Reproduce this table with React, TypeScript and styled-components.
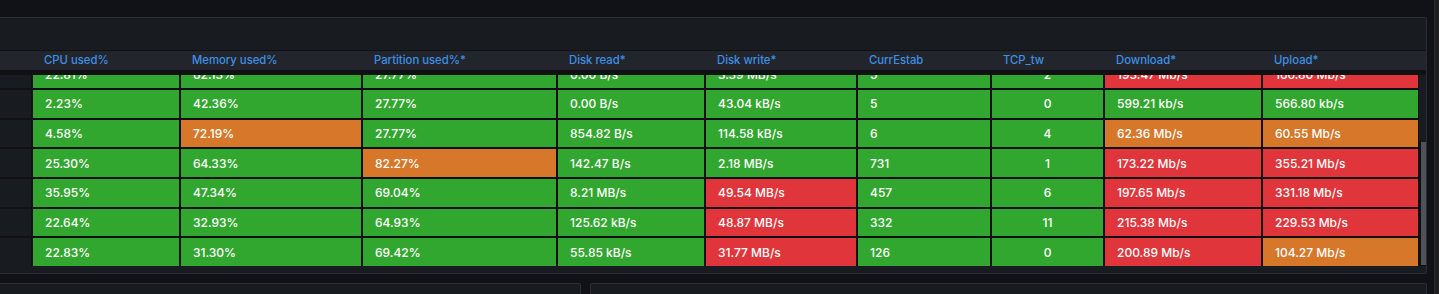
import React from 'react';
import styled, { createGlobalStyle } from 'styled-components';

type Tone = 'green' | 'orange' | 'red' | 'none';
type Cell = [string, Tone];

const COLUMNS = [
  { title: '', align: 'left' },
  { title: 'CPU used%', align: 'left' },
  { title: 'Memory used%', align: 'left' },
  { title: 'Partition used%*', align: 'left' },
  { title: 'Disk read*', align: 'left' },
  { title: 'Disk write*', align: 'left' },
  { title: 'CurrEstab', align: 'left' },
  { title: 'TCP_tw', align: 'center' },
  { title: 'Download*', align: 'left' },
  { title: 'Upload*', align: 'left' },
];

const g = (v: string): Cell => [v, 'green'];
const o = (v: string): Cell => [v, 'orange'];
const r = (v: string): Cell => [v, 'red'];

// first row is scrolled half out of view, like in the dashboard
const ROWS: Cell[][] = [
  [g('22.81%'), g('62.13%'), g('27.77%'), g('0.00 B/s'), g('3.39 MB/s'), g('5'), g('2'), r('193.47 Mb/s'), r('166.80 Mb/s')],
  [g('2.23%'), g('42.36%'), g('27.77%'), g('0.00 B/s'), g('43.04 kB/s'), g('5'), g('0'), g('599.21 kb/s'), g('566.80 kb/s')],
  [g('4.58%'), o('72.19%'), g('27.77%'), g('854.82 B/s'), g('114.58 kB/s'), g('6'), g('4'), o('62.36 Mb/s'), o('60.55 Mb/s')],
  [g('25.30%'), g('64.33%'), o('82.27%'), g('142.47 B/s'), g('2.18 MB/s'), g('731'), g('1'), r('173.22 Mb/s'), r('355.21 Mb/s')],
  [g('35.95%'), g('47.34%'), g('69.04%'), g('8.21 MB/s'), r('49.54 MB/s'), g('457'), g('6'), r('197.65 Mb/s'), r('331.18 Mb/s')],
  [g('22.64%'), g('32.93%'), g('64.93%'), g('125.62 kB/s'), r('48.87 MB/s'), g('332'), g('11'), r('215.38 Mb/s'), r('229.53 Mb/s')],
  [g('22.83%'), g('31.30%'), g('69.42%'), g('55.85 kB/s'), r('31.77 MB/s'), g('126'), g('0'), r('200.89 Mb/s'), o('104.27 Mb/s')],
];

const App = () => {
  return (
    <>
      <GlobalStyle />
      <Page>
        <Main>
          <Panel>
            <PanelTitle />
            <Table>
              <HeaderRow>
                {COLUMNS.map((c, i) => (
                  <HeaderCell key={i}>{c.title}</HeaderCell>
                ))}
              </HeaderRow>
              <Body>
                <Rows>
                  {ROWS.map((row, ri) => (
                    <React.Fragment key={ri}>
                      <Cell $tone="none" $align="left" />
                      {row.map(([value, tone], ci) => (
                        <Cell key={ci} $tone={tone} $align={COLUMNS[ci + 1].align}>
                          {value}
                        </Cell>
                      ))}
                    </React.Fragment>
                  ))}
                </Rows>
                <ScrollTrack>
                  <ScrollThumb />
                </ScrollTrack>
              </Body>
            </Table>
          </Panel>
          <BottomRow>
            <SmallPanel $width="621px" />
            <SmallPanel $width="auto" />
          </BottomRow>
        </Main>
        <PageScroll />
      </Page>
    </>
  );
};

export default App;

const GRID = '70px 146px 180px 193px 146px 150px 132px 111px 156px 155px';

const TONES: Record<Tone, string> = {
  green: '#32a72f',
  orange: '#d6772a',
  red: '#e0353a',
  none: '#181b1f',
};

const GlobalStyle = createGlobalStyle`
  html, body {
    margin: 0;
    padding: 0;
    background: #111217;
    overflow: hidden;
  }
  body {
    font-family: Inter, 'Noto Sans', sans-serif;
    -webkit-font-smoothing: antialiased;
  }
`;

const Page = styled.div`
  display: flex;
  height: 294px;
  overflow: hidden;
`;

const Main = styled.div`
  flex: 1;
  min-width: 0;
  padding: 17px 7px 0 0;
  display: flex;
  flex-direction: column;
  gap: 9px;
`;

const PageScroll = styled.div`
  width: 4px;
  background: #1e1f23;
  border-left: 1px solid #2a2b30;
`;

const Panel = styled.div`
  flex-shrink: 0;
  margin-left: -40px;
  height: 257px;
  box-sizing: border-box;
  background: #181b1f;
  border: 1px solid rgba(204, 204, 220, 0.1);
  border-radius: 2px;
  display: flex;
  flex-direction: column;
  overflow: hidden;
`;

const PanelTitle = styled.div`
  flex-shrink: 0;
  height: 32px;
`;

const Table = styled.div`
  flex-shrink: 0;
  border-top: 1px solid #101115;
  display: flex;
  flex-direction: column;
`;

const HeaderRow = styled.div`
  flex-shrink: 0;
  display: grid;
  grid-template-columns: ${GRID};
  column-gap: 2px;
  height: 19px;
  background: #22252b;
  border-bottom: 2px solid #101115;
`;

const HeaderCell = styled.div`
  padding-left: 11px;
  font-size: 11.3px;
  font-weight: 500;
  line-height: 19px;
  color: #3d90e6;
  white-space: nowrap;
`;

const Body = styled.div`
  flex-shrink: 0;
  display: flex;
  height: 194px;
  box-sizing: border-box;
  border-top: 3px solid #101115;
  overflow: hidden;
`;

const Rows = styled.div`
  flex: 1;
  display: grid;
  grid-template-columns: ${GRID};
  grid-auto-rows: 27.7px;
  gap: 2px;
  margin-top: -14.7px;
  align-content: start;
  background: #101115;
`;

const Cell = styled.div<{ $tone: Tone; $align: string }>`
  display: flex;
  align-items: center;
  justify-content: ${(p) => (p.$align === 'center' ? 'center' : 'flex-start')};
  padding-left: ${(p) => (p.$align === 'center' ? '0' : '12px')};
  background: ${(p) => TONES[p.$tone]};
  color: #ffffff;
  font-size: 12px;
  font-weight: 500;
  white-space: nowrap;
`;

const ScrollTrack = styled.div`
  width: 7px;
  display: flex;
  flex-direction: column;
  background: #181b1f;
`;

const ScrollThumb = styled.div`
  margin-top: 67px;
  flex: 1;
  background: #50525a;
  border-left: 2px solid #0f1013;
  border-bottom: 1px solid #0f1013;
`;

const BottomRow = styled.div`
  flex-shrink: 0;
  margin-left: -40px;
  display: flex;
  gap: 9px;
`;

const SmallPanel = styled.div<{ $width: string }>`
  width: ${(p) => p.$width};
  flex: ${(p) => (p.$width === 'auto' ? '1' : '0 0 auto')};
  height: 80px;
  box-sizing: border-box;
  background: #181b1f;
  border: 1px solid rgba(204, 204, 220, 0.1);
  border-radius: 2px;
`;
